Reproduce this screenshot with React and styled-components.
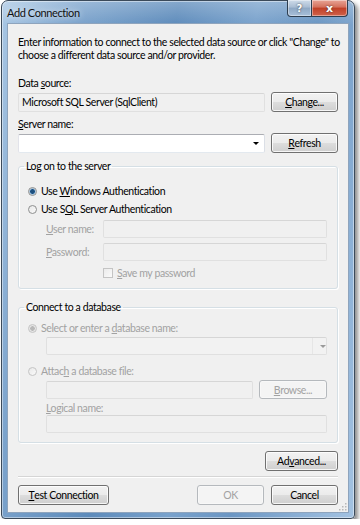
import React from 'react';
import styled, { createGlobalStyle } from 'styled-components';

const GlobalStyle = createGlobalStyle`
  body {
    margin: 0;
    background: #fff;
    font-family: "Lato", "Liberation Sans", sans-serif;
    font-size: 10.5px;
    letter-spacing: -0.4px;
    color: #000;
  }
`;

const Window = styled.div`
  width: 342px;
  margin-left: 1px;
  padding: 0 5px 5px;
  border: 1px solid #3b4a5a;
  border-radius: 7px 7px 4px 4px;
  background:
    linear-gradient(to bottom, rgba(255,255,255,0.25), rgba(255,255,255,0) 24px),
    linear-gradient(100deg, #a9c7e4 0%, #7ba3cc 18%, #5d8bbb 40%, #79a2cc 58%, #6b96c3 72%, #a4c3e2 100%);
  box-shadow: 3px 3px 4px rgba(0,0,0,0.45), inset 0 0 0 1px rgba(255,255,255,0.45);
`;

const TitleBar = styled.div`
  height: 22px;
  display: flex;
  align-items: flex-start;
`;

const Title = styled.span`
  margin-top: 4px;
  font-size: 11px;
  line-height: 15px;
  color: #111;
  text-shadow: 0 0 6px rgba(255,255,255,0.9);
`;

const Caption = styled.div`
  margin-left: auto;
  margin-right: 1px;
  display: flex;
  margin-top: -1px;
`;

const CaptionButton = styled.div`
  height: 16px;
  width: ${p => (p.$close ? '35px' : '23px')};
  display: flex;
  align-items: center;
  justify-content: center;
  border: 1px solid #2d3e50;
  border-top: none;
  border-radius: ${p => (p.$close ? '0 0 4px 0' : '0 0 0 4px')};
  border-left: ${p => (p.$close ? 'none' : '1px solid #2d3e50')};
  background: ${p =>
    p.$close
      ? 'linear-gradient(to bottom, #e8a496 0%, #d4705c 45%, #c03f26 50%, #d0624a 100%)'
      : 'linear-gradient(to bottom, #cfdcea 0%, #a9bdd3 45%, #8ea8c4 50%, #a8c0da 100%)'};
  box-shadow: inset 0 0 0 1px rgba(255,255,255,0.4);
  color: #fff;
  font-family: "DejaVu Sans", sans-serif;
  font-weight: bold;
  letter-spacing: 0;
  font-size: ${p => (p.$close ? '11px' : '10px')};
  text-shadow: 0 0 2px #333;
`;

const Client = styled.div`
  background: #f0f0f0;
  border: 1px solid #8ea4bd;
  padding: 12px 10px 0 10px;
  position: relative;
  height: 490px;
  box-sizing: border-box;
`;

const Intro = styled.p`
  margin: 0;
  line-height: 13px;
  white-space: nowrap;
`;

const Label = styled.div`
  line-height: 14px;
  margin-top: ${p => p.$top || 0}px;
  margin-bottom: ${p => p.$bottom ?? 2}px;
  margin-left: ${p => p.$indent || 0}px;
  color: ${p => (p.$disabled ? '#a2a2a2' : '#000')};
`;

const Row = styled.div`
  display: flex;
  align-items: center;
  gap: ${p => p.$gap ?? 6}px;
  margin-top: ${p => p.$top || 0}px;
  margin-left: ${p => p.$indent || 0}px;
  justify-content: ${p => p.$justify || 'flex-start'};
`;

const Field = styled.div`
  flex: 1;
  height: ${p => p.$h || 18}px;
  box-sizing: border-box;
  display: flex;
  align-items: center;
  padding: 0 3px;
  border: 1px solid;
  border-color: ${p => (p.$disabled ? '#d6d6d6 #e0e0e0 #e0e0e0 #e0e0e0' : '#abadb3 #dbdfe6 #e3e9ef #e2e3ea')};
  border-radius: 2px;
  background: ${p => (p.$disabled ? '#f0f0f0' : '#fff')};
  color: #000;
`;

const Arrow = styled.span`
  margin-left: auto;
  width: 0;
  height: 0;
  border-left: 3px solid transparent;
  border-right: 3px solid transparent;
  border-top: 3px solid ${p => (p.$disabled ? '#9a9a9a' : '#000')};
  margin-right: ${p => (p.$disabled ? 0 : 2)}px;
`;

const ComboDivider = styled.span`
  margin-left: auto;
  align-self: stretch;
  width: 13px;
  border-left: 1px solid #e6e6e6;
  display: flex;
  align-items: center;
  justify-content: center;
  margin-right: -3px;
`;

const Button = styled.div`
  width: ${p => p.$w || 67}px;
  height: ${p => p.$h || 20}px;
  box-sizing: border-box;
  display: flex;
  align-items: center;
  justify-content: center;
  border: 1px solid ${p => (p.$disabled ? '#b5b9bd' : '#707070')};
  border-radius: 3px;
  background: ${p =>
    p.$disabled
      ? '#f4f4f4'
      : 'linear-gradient(to bottom, #f2f2f2 0%, #ebebeb 50%, #dddddd 51%, #cfcfcf 100%)'};
  box-shadow: inset 0 0 0 1px ${p => (p.$disabled ? '#f8f8f8' : 'rgba(255,255,255,0.8)')};
  color: ${p => (p.$disabled ? '#a2a2a2' : '#000')};
  flex: none;
`;

const U = styled.span`
  text-decoration: underline;
  text-underline-offset: 1px;
`;

const Group = styled.fieldset`
  margin: ${p => p.$top || 0}px 0 0;
  padding: 0 10px ${p => p.$bottom || 0}px;
  border: 1px solid #d5dfe5;
  border-radius: 3px;
  box-shadow: inset 1px 1px 0 #fff, 1px 1px 0 #fff;
  min-width: 0;
`;

const Legend = styled.legend`
  margin-left: -5px;
  padding: 0 2px;
  line-height: 14px;
`;

const Option = styled.label`
  display: flex;
  align-items: center;
  gap: 4px;
  line-height: 16px;
  margin-left: -1px;
  margin-top: ${p => p.$top || 0}px;
  color: ${p => (p.$disabled ? '#a2a2a2' : '#000')};
`;

const RadioDot = styled.span`
  width: 9px;
  height: 9px;
  box-sizing: border-box;
  border-radius: 50%;
  border: 1px solid ${p => (p.$disabled ? '#c4c4c4' : '#8e8f8f')};
  background: ${p =>
    p.$checked
      ? `radial-gradient(circle, ${p.$disabled ? '#b8b8b8' : '#1d4f7e'} 0 2px, ${p.$disabled ? '#e4e4e4' : '#6fa5d3'} 2.5px, #e8e8e8 3.5px)`
      : 'linear-gradient(135deg, #e8e8e8, #fafafa)'};
  flex: none;
`;

const Check = styled.span`
  width: 10px;
  height: 10px;
  box-sizing: border-box;
  border: 1px solid #c4c4c4;
  background: linear-gradient(135deg, #ebebeb, #fafafa);
  flex: none;
`;

const SubLabel = styled.span`
  width: 57px;
  flex: none;
  color: #a2a2a2;
  line-height: 14px;
  white-space: nowrap;
`;

const Separator = styled.div`
  margin-top: 5px;
  border-top: 1px solid #d5d5d5;
  border-bottom: 1px solid #fff;
`;

const Spacer = styled.div`
  flex: 1;
`;

const Grip = styled.svg`
  position: absolute;
  right: 1px;
  bottom: 1px;
`;

function Radio({ checked, disabled, children, top }) {
  return (
    <Option $disabled={disabled} $top={top}>
      <RadioDot $checked={checked} $disabled={disabled} />
      <span>{children}</span>
    </Option>
  );
}

export default function App() {
  return (
    <>
      <GlobalStyle />
      <Window>
        <TitleBar>
          <Title>Add Connection</Title>
          <Caption>
            <CaptionButton>?</CaptionButton>
            <CaptionButton $close>x</CaptionButton>
          </Caption>
        </TitleBar>
        <Client>
          <Intro>
            Enter information to connect to the selected data source or click "Change" to
            <br />
            choose a different data source and/or provider.
          </Intro>

          <Label $top={14}>Data <U>s</U>ource:</Label>
          <Row>
            <Field $h={19} $disabled>Microsoft SQL Server (SqlClient)</Field>
            <Button><U>C</U>hange...</Button>
          </Row>

          <Label $top={5}><U>S</U>erver name:</Label>
          <Row>
            <Field $h={19}>
              <Arrow />
            </Field>
            <Button><U>R</U>efresh</Button>
          </Row>

          <Group $top={6} $bottom={8}>
            <Legend>Log on to the server</Legend>
            <Radio checked top={10}>Use <U>W</U>indows Authentication</Radio>
            <Radio top={2}>Use S<U>Q</U>L Server Authentication</Radio>
            <Row $indent={17} $gap={0} $top={3}>
              <SubLabel><U>U</U>ser name:</SubLabel>
              <Field $disabled />
            </Row>
            <Row $indent={17} $gap={0} $top={5}>
              <SubLabel><U>P</U>assword:</SubLabel>
              <Field $disabled />
            </Row>
            <Row $indent={74} $gap={4} $top={5}>
              <Check />
              <Label as="span" $disabled $bottom={0}><U>S</U>ave my password</Label>
            </Row>
          </Group>

          <Group $top={11} $bottom={9}>
            <Legend>Connect to a database</Legend>
            <Radio checked disabled top={6}>Select or enter a <U>d</U>atabase name:</Radio>
            <Row $indent={17} $top={1}>
              <Field $disabled style={{ background: '#f2f2f2' }}>
                <ComboDivider><Arrow $disabled /></ComboDivider>
              </Field>
            </Row>
            <Radio disabled top={8}>Attac<U>h</U> a database file:</Radio>
            <Row $indent={17} $top={1}>
              <Field $disabled />
              <Button $w={68} $h={19} $disabled>
                <U>B</U>rowse...
              </Button>
            </Row>
            <Label $disabled $indent={17} $top={2} $bottom={0}><U>L</U>ogical name:</Label>
            <Row $indent={17}>
              <Field $disabled />
            </Row>
          </Group>

          <Row $justify="flex-end" $top={8}>
            <Button $w={73}>Ad<U>v</U>anced...</Button>
          </Row>
          <Separator />
          <Row $top={7} $gap={7}>
            <Button $w={91}><U>T</U>est Connection</Button>
            <Spacer />
            <Button $disabled>OK</Button>
            <Button>Cancel</Button>
          </Row>
          <Grip width="9" height="9" viewBox="0 0 9 9">
            {[[7, 1], [7, 4], [4, 4], [7, 7], [4, 7], [1, 7]].map(([x, y]) => (
              <rect key={`${x}-${y}`} x={x} y={y} width="1.5" height="1.5" fill="#b8b8b8" />
            ))}
          </Grip>
        </Client>
      </Window>
    </>
  );
}
